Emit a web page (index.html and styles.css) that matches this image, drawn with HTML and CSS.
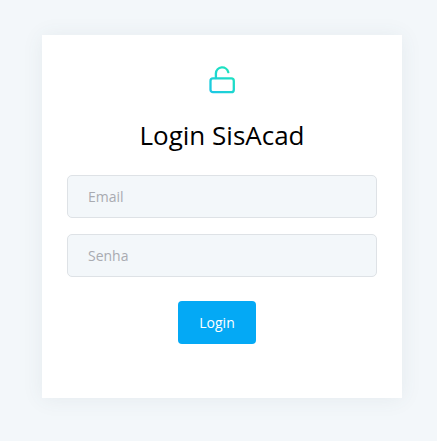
FILE: index.html
```html
<!DOCTYPE html>
<html lang="pt-BR">
<head>
<meta charset="utf-8">
<title>Login SisAcad</title>
<link rel="stylesheet" href="styles.css">
</head>
<body>
<main class="card">
  <svg class="lock" viewBox="0 0 28 30" fill="none" stroke="url(#teal)" stroke-width="2.3" stroke-linecap="round">
    <defs>
      <linearGradient id="teal" gradientUnits="userSpaceOnUse" x1="26" y1="1" x2="0" y2="29">
        <stop offset="0" stop-color="#1de9b6"/>
        <stop offset="1" stop-color="#1dc4e9"/>
      </linearGradient>
    </defs>
    <rect x="2.5" y="13.4" width="23.3" height="13.8" rx="2.5"/>
    <path d="M7.9 13V8.4a6.3 6.3 0 0 1 12.4-1.2"/>
  </svg>
  <h1 class="title">Login SisAcad</h1>
  <form class="form">
    <input class="field" type="email" placeholder="Email">
    <input class="field" type="password" placeholder="Senha">
    <button class="submit" type="button">Login</button>
  </form>
</main>
</body>
</html>
```

FILE: styles.css
```css
* { box-sizing: border-box; }
body {
  margin: 0;
  height: 441px;
  padding: 35px 35px 0 42px;
  overflow: hidden;
  background: #f3f7fa;
  font-family: "Open Sans", sans-serif;
}
.card {
  height: 363px;
  padding: 30px 25px 0;
  display: flex;
  flex-direction: column;
  align-items: center;
  background: #fff;
  box-shadow: 0 1px 20px rgba(69, 90, 100, 0.08);
}
.lock { width: 28px; height: 30px; }
.title {
  margin: 22px 0 0;
  font-size: 26px;
  line-height: 36px;
  font-weight: 400;
  color: #000;
}
.form {
  width: 100%;
  margin-top: 22px;
  display: flex;
  flex-direction: column;
  align-items: center;
}
.field {
  width: 100%;
  height: 43px;
  margin: 0 0 16px;
  padding: 0 20px;
  border: 1px solid #dee2e6;
  border-radius: 5px;
  background: #f3f7fa;
  font: 14px "Open Sans", sans-serif;
}
.field::placeholder { color: #a9abb1; opacity: 1; }
.submit {
  width: 78px;
  height: 43px;
  margin: 8px 10px 0 0;
  border: 0;
  border-radius: 4px;
  background: #04a9f5;
  color: #fff;
  font: 14px "Open Sans", sans-serif;
}
```
